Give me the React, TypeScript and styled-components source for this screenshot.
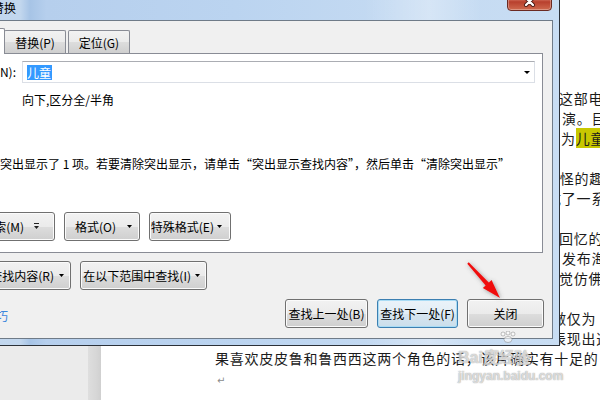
import React from "react";
import styled, { createGlobalStyle, css } from "styled-components";

const UI_FONT = `"Noto Sans CJK SC", "Noto Sans", sans-serif`;

const GlobalStyle = createGlobalStyle`
  html, body { margin: 0; padding: 0; width: 600px; height: 400px; overflow: hidden; background: #ffffff; }
  #root { width: 600px; height: 400px; }
  * { box-sizing: border-box; }
`;

const Screen = styled.div`
  position: relative;
  width: 600px;
  height: 400px;
  overflow: hidden;
  background: #fff;
`;

/* ---------- Word document behind the dialog ---------- */
const DocArea = styled.div`
  display: flex;
  width: 600px;
  height: 400px;
`;
const Gutter = styled.div`
  flex: none;
  width: 88px;
  background: #ebebeb;
`;
const PageShadow = styled.div`
  flex: none;
  width: 13px;
  background: linear-gradient(90deg, #dedede 0%, #d7d7d7 60%, #d0d0d0 100%);
`;
const Page = styled.div`
  flex: 1;
  min-width: 0;
  overflow: hidden;
  background: #fff;
  padding: 88px 0 0 114px;
  font-family: ${UI_FONT};
  font-size: 14px;
  line-height: 20px;
  letter-spacing: 0.75px;
  color: #1b1b1b;
`;
const DocLine = styled.div<{ $indent: number }>`
  height: 20px;
  white-space: nowrap;
  padding-left: ${(p) => p.$indent}px;
`;
const Highlight = styled.span`
  background: #c8c800;
`;
const ReturnMark = styled.span`
  font-family: "DejaVu Sans", sans-serif;
  font-size: 10px;
  color: #8c8c8c;
  padding-left: 1px;
`;

/* ---------- Dialog window ---------- */
const Window = styled.div`
  position: absolute;
  left: -90px;
  top: 0;
  width: 650px;
  height: 346px;
  display: flex;
  flex-direction: column;
  border-right: 1px solid #2c3138;
  border-bottom: 1px solid #2c3138;
  background:
    linear-gradient(90deg, rgba(255,255,255,0) 70%, rgba(255,255,255,0.3) 80%, rgba(255,255,255,0) 88%),
    linear-gradient(90deg, #c3d8ef 0%, #c2d7ee 17%, #a7c4e6 18.5%, #b6cfed 21%, #bbd4f0 50%, #c4daf2 75%, #c8ddf3 100%);
  font-family: ${UI_FONT};
  font-size: 12px;
  color: #000;
`;
const TitleBar = styled.div`
  flex: none;
  height: 20px;
  display: flex;
  justify-content: space-between;
  align-items: flex-start;
  padding: 0 7px 0 46px;
`;
const TitleText = styled.span`
  font-size: 12px;
  line-height: 15px;
  white-space: nowrap;
`;
const CloseButton = styled.div`
  width: 45px;
  height: 20px;
  margin-top: -9px;
  border: 1px solid #6b2a22;
  border-radius: 0 0 4px 4px;
  background: linear-gradient(#d99a8c 0%, #c9604d 45%, #b8402d 55%, #cf6a4f 100%);
  box-shadow: inset 0 0 0 1px rgba(255, 255, 255, 0.3);
  display: flex;
  align-items: center;
  justify-content: center;
`;
const WindowBody = styled.div`
  flex: 1;
  min-height: 0;
  display: flex;
  padding: 0 6px 6px 7px;
`;
const Client = styled.div`
  flex: 1;
  min-width: 0;
  display: flex;
  flex-direction: column;
  border: 1px solid #6f7b88;
  background: #f0f0f0;
  padding: 7px 8px 9px 12px;
`;

/* ---------- Tabs ---------- */
const TabRow = styled.div`
  position: relative;
  z-index: 1;
  flex: none;
  height: 25px;
  display: flex;
  align-items: flex-end;
  padding-left: 2px;
`;
const Tab = styled.div<{ $active?: boolean; $w: number; $ml?: number }>`
  flex: none;
  width: ${(p) => p.$w}px;
  margin-left: ${(p) => p.$ml ?? 0}px;
  display: flex;
  align-items: center;
  justify-content: center;
  border: 1px solid #898c95;
  border-bottom: none;
  border-radius: 2px 2px 0 0;
  white-space: nowrap;
  ${(p) =>
    p.$active
      ? css`
          position: relative;
          z-index: 1;
          height: 26px;
          margin-bottom: -1px;
          margin-right: -1px;
          background: #fff;
        `
      : css`
          height: 23px;
          background: linear-gradient(#f2f2f2 0%, #ebebeb 50%, #dddddd 51%, #cfcfcf 100%);
        `}
`;
const Panel = styled.div`
  flex: none;
  height: 200px;
  margin-right: 1px;
  border: 1px solid #898c95;
  background: #fff;
  padding: 7px 7px 0 9px;
  display: flex;
  flex-direction: column;
`;

/* ---------- Fields ---------- */
const FieldRow = styled.div<{ $mt?: number }>`
  flex: none;
  display: flex;
  align-items: center;
  gap: 6px;
  min-height: 16px;
  line-height: 16px;
  margin-top: ${(p) => p.$mt ?? 0}px;
`;
const FieldLabel = styled.span<{ $align: "left" | "right" }>`
  flex: none;
  width: 76px;
  text-align: ${(p) => p.$align};
  white-space: nowrap;
`;
const ComboBox = styled.div`
  flex: 1;
  height: 22px;
  display: flex;
  align-items: center;
  justify-content: space-between;
  border: 1px solid #dbdfe6;
  border-top-color: #abadb3;
  background: #fff;
  padding: 0 4px;
`;
const SelectedText = styled.span`
  background: #3399ff;
  color: #fff;
  line-height: 15px;
  padding-right: 1px;
`;
const Message = styled.div`
  flex: none;
  margin-top: 48px;
  margin-left: 60px;
  line-height: 16px;
  white-space: nowrap;
`;

/* ---------- Buttons ---------- */
const ButtonRow = styled.div<{ $mt?: number; $ml?: number }>`
  flex: none;
  display: flex;
  gap: 9px;
  margin-top: ${(p) => p.$mt ?? 0}px;
  margin-left: ${(p) => p.$ml ?? 0}px;
`;
const WinButton = styled.button<{ $w: number; $focused?: boolean }>`
  flex: none;
  appearance: none;
  width: ${(p) => p.$w}px;
  height: 29px;
  padding: 0;
  display: flex;
  align-items: center;
  justify-content: center;
  font: inherit;
  line-height: 15px;
  color: #000;
  white-space: nowrap;
  border: 1px solid #707070;
  border-radius: 3px;
  background: linear-gradient(#f2f2f2 0%, #ebebeb 50%, #dddddd 51%, #cfcfcf 100%);
  box-shadow: inset 0 0 0 1px #fbfbfb;
  ${(p) =>
    p.$focused &&
    css`
      border-color: #3c7fb1;
      background: linear-gradient(#eaf3f9 0%, #e2edf5 50%, #d6e5f0 51%, #cbdeeb 100%);
      box-shadow: inset 0 0 0 1px #a9dcf5;
    `}
`;
const DropButton = styled(WinButton)<{ $gap: number; $pr: number }>`
  justify-content: flex-end;
  gap: ${(p) => p.$gap}px;
  padding-right: ${(p) => p.$pr}px;
`;
const BottomRow = styled.div`
  flex: none;
  display: flex;
  align-items: flex-start;
  margin-top: 9px;
`;
const HelpLink = styled.span`
  flex: none;
  margin-top: 9px;
  margin-left: 30px;
  line-height: 16px;
  color: #3a86dc;
  white-space: nowrap;
`;
const Spacer = styled.div`
  flex: 1;
`;

/* ---------- Overlays ---------- */
const ArrowOverlay = styled.svg`
  position: absolute;
  left: 450px;
  top: 245px;
  overflow: visible;
  pointer-events: none;
`;
const Watermark = styled.div`
  position: absolute;
  left: 458px;
  top: 331px;
  display: flex;
  flex-direction: column;
  align-items: flex-start;
  pointer-events: none;
  font-family: "Liberation Sans", Arial, sans-serif;
  font-weight: bold;
  color: rgba(255, 255, 255, 0.6);
  text-shadow: 0 0 1px rgba(120, 120, 120, 0.5), 0 0 1px rgba(120, 120, 120, 0.5);
`;
const WatermarkBrand = styled.span`
  margin-top: 6px;
  font-size: 16px;
  line-height: 18px;
`;
const WatermarkUrl = styled.span`
  margin-top: 3px;
  font-size: 12px;
  line-height: 13px;
`;

const Caret = ({ w = 5, h = 3 }: { w?: number; h?: number }) => (
  <svg width={w} height={h} viewBox={`0 0 ${w} ${h}`} style={{ flex: "none", display: "block" }}>
    <polygon points={`0,0 ${w},0 ${w / 2},${h}`} fill="#000" />
  </svg>
);

const ToggleIcon = () => (
  <svg width="5" height="7" viewBox="0 0 5 7" style={{ flex: "none", display: "block" }}>
    <rect x="0" y="0" width="5" height="1" fill="#222" />
    <polygon points="0,3 5,3 2.5,6" fill="#222" />
  </svg>
);

const docLines: { indent: number; text: string; mark?: string }[] = [
  { indent: 344, text: "这部电影" },
  { indent: 347, text: "演。目前" },
  { indent: 346, text: "为", mark: "儿童" },
  { indent: 0, text: "" },
  { indent: 330, text: "奇怪的趣" },
  { indent: 332, text: "成了一系" },
  { indent: 0, text: "" },
  { indent: 344, text: "回忆的" },
  { indent: 347, text: "发布海" },
  { indent: 344, text: "觉仿佛" },
  { indent: 0, text: "" },
  { indent: 337, text: "做仅为" },
  { indent: 337, text: "表现出这" },
  { indent: 0, text: "果喜欢皮皮鲁和鲁西西这两个角色的话，该片确实有十足的" },
];

export default function App() {
  return (
    <>
      <GlobalStyle />
      <Screen>
        <DocArea>
          <Gutter />
          <PageShadow />
          <Page>
            {docLines.map((l, i) => (
              <DocLine key={i} $indent={l.indent}>
                {l.text}
                {l.mark && <Highlight>{l.mark}</Highlight>}
              </DocLine>
            ))}
            <DocLine $indent={1}>
              <ReturnMark>↵</ReturnMark>
            </DocLine>
          </Page>
        </DocArea>

        <Window>
          <TitleBar>
            <TitleText>查找和替换</TitleText>
            <CloseButton>
              <svg width="13" height="11" viewBox="0 0 13 11">
                <path d="M3 2 L10 9 M10 2 L3 9" stroke="#4a1a14" strokeWidth="4" strokeLinecap="round" />
                <path d="M3 2 L10 9 M10 2 L3 9" stroke="#ffffff" strokeWidth="2.2" strokeLinecap="round" />
              </svg>
            </CloseButton>
          </TitleBar>
          <WindowBody>
            <Client>
              <TabRow>
                <Tab $active $w={73}>查找(D)</Tab>
                <Tab $w={62}>替换(P)</Tab>
                <Tab $w={62} $ml={2}>定位(G)</Tab>
              </TabRow>
              <Panel>
                <FieldRow>
                  <FieldLabel $align="right">查找内容(N):</FieldLabel>
                  <ComboBox>
                    <SelectedText>儿童</SelectedText>
                    <Caret w={6} h={3} />
                  </ComboBox>
                </FieldRow>
                <FieldRow $mt={9}>
                  <FieldLabel $align="left">选项:</FieldLabel>
                  <span>向下,区分全/半角</span>
                </FieldRow>
                <Message>
                  突出显示了 1 项。若要清除突出显示，请单击“突出显示查找内容”，然后单击“清除突出显示”
                </Message>
                <ButtonRow $mt={40}>
                  <DropButton $w={115} $gap={10} $pr={15}>
                    高级搜索(M)
                    <ToggleIcon />
                  </DropButton>
                  <DropButton $w={76} $gap={11} $pr={7}>
                    格式(O)
                    <Caret />
                  </DropButton>
                  <DropButton $w={82} $gap={3} $pr={8}>
                    特殊格式(E)
                    <Caret />
                  </DropButton>
                </ButtonRow>
              </Panel>
              <ButtonRow $mt={8} $ml={10}>
                <DropButton $w={131} $gap={5} $pr={6}>
                  突出显示查找内容(R)
                  <Caret />
                </DropButton>
                <DropButton $w={127} $gap={4} $pr={6}>
                  在以下范围中查找(I)
                  <Caret />
                </DropButton>
              </ButtonRow>
              <BottomRow>
                <HelpLink>操作技巧</HelpLink>
                <Spacer />
                <ButtonRow>
                  <WinButton $w={83}>查找上一处(B)</WinButton>
                  <WinButton $w={81} $focused>
                    查找下一处(F)
                  </WinButton>
                  <WinButton $w={77}>关闭</WinButton>
                </ButtonRow>
              </BottomRow>
            </Client>
          </WindowBody>
        </Window>

        <ArrowOverlay width="70" height="70" viewBox="0 0 70 70">
          <defs>
            <filter id="arrowShadow" x="-50%" y="-50%" width="200%" height="200%">
              <feDropShadow dx="1" dy="1" stdDeviation="2" floodColor="#505050" floodOpacity="0.55" />
            </filter>
          </defs>
          <polygon
            points="18.74,17.33 38.82,37.51 41.6,34.95 50,53 32.8,43.05 35.58,40.49 17.26,18.68"
            fill="#f01010"
            filter="url(#arrowShadow)"
          />
        </ArrowOverlay>

        <Watermark>
          <svg width="60" height="12" viewBox="0 0 60 12" style={{ display: "block" }}>
            <g fill="rgba(255,255,255,0.6)" stroke="rgba(120,120,120,0.45)" strokeWidth="1">
              <circle cx="45" cy="3" r="2" />
              <circle cx="50" cy="2" r="2" />
              <circle cx="55" cy="3" r="2" />
              <ellipse cx="50" cy="8.5" rx="4" ry="3" />
            </g>
          </svg>
          <WatermarkBrand>Bai度经验</WatermarkBrand>
          <WatermarkUrl>jingyan.baidu.com</WatermarkUrl>
        </Watermark>
      </Screen>
    </>
  );
}
